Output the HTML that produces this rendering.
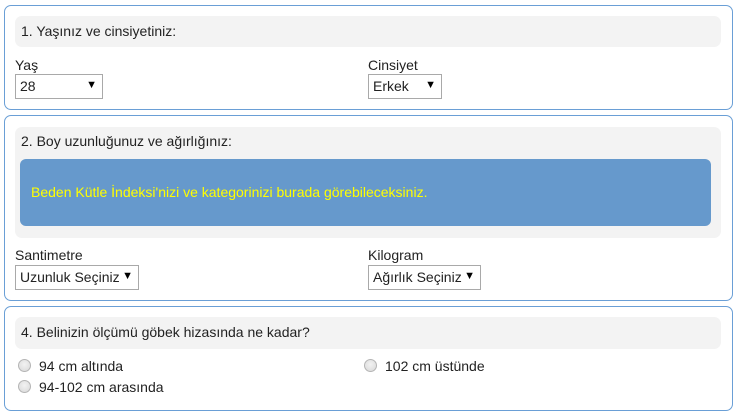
<!DOCTYPE html>
<html><head><meta charset="utf-8"><style>
*{box-sizing:border-box;margin:0;padding:0}
body{width:737px;height:414px;background:#fff;font-family:"Liberation Sans",Arial,sans-serif;font-size:14px;color:#222;position:relative;overflow:hidden}
.p{position:absolute;left:4px;width:729px;border:1px solid #6a9fd6;border-radius:7px}
.g{position:absolute;left:15px;width:706px;background:#f3f3f3;border-radius:7px}
.t{position:absolute;white-space:nowrap;line-height:16px}
.s{position:absolute;height:25px;border:1px solid #a9a9a9;background:#fff;padding-left:4px;line-height:23px;white-space:nowrap}
.s b{position:absolute;right:5px;top:-1px;font-size:11px;font-weight:normal;color:#000}
.r{position:absolute;width:13px;height:13px;border-radius:50%;border:1px solid #b5b5b5;background:radial-gradient(circle at 50% 40%,#f2f2f2,#d8d8d8)}
</style></head><body>
<div class="p" style="top:5px;height:105px"></div>
<div class="g" style="top:16px;height:31px"></div>
<div class="t" style="left:21px;top:23px">1. Yaşınız ve cinsiyetiniz:</div>
<div class="t" style="left:15px;top:57px">Yaş</div>
<div class="s" style="left:15px;top:74px;width:88px">28<b>▼</b></div>
<div class="t" style="left:368px;top:57px">Cinsiyet</div>
<div class="s" style="left:368px;top:74px;width:74px">Erkek<b>▼</b></div>

<div class="p" style="top:115px;height:186px"></div>
<div class="g" style="top:127px;height:111px"></div>
<div class="t" style="left:21px;top:133px">2. Boy uzunluğunuz ve ağırlığınız:</div>
<div style="position:absolute;left:20px;top:159px;width:691px;height:67px;background:#6699cc;border-radius:6px"></div>
<div class="t" style="left:31px;top:184px;color:#ffff00">Beden Kütle İndeksi'nizi ve kategorinizi burada görebileceksiniz.</div>
<div class="t" style="left:15px;top:247px">Santimetre</div>
<div class="s" style="left:15px;top:265px;width:124px">Uzunluk Seçiniz<b>▼</b></div>
<div class="t" style="left:368px;top:247px">Kilogram</div>
<div class="s" style="left:368px;top:265px;width:113px">Ağırlık Seçiniz<b>▼</b></div>

<div class="p" style="top:306px;height:105px"></div>
<div class="g" style="top:317px;height:32px"></div>
<div class="t" style="left:21px;top:324px">4. Belinizin ölçümü göbek hizasında ne kadar?</div>
<div class="r" style="left:18px;top:359px"></div>
<div class="t" style="left:39px;top:358px">94 cm altında</div>
<div class="r" style="left:18px;top:380px"></div>
<div class="t" style="left:39px;top:379px">94-102 cm arasında</div>
<div class="r" style="left:364px;top:359px"></div>
<div class="t" style="left:385px;top:358px">102 cm üstünde</div>
</body></html>
